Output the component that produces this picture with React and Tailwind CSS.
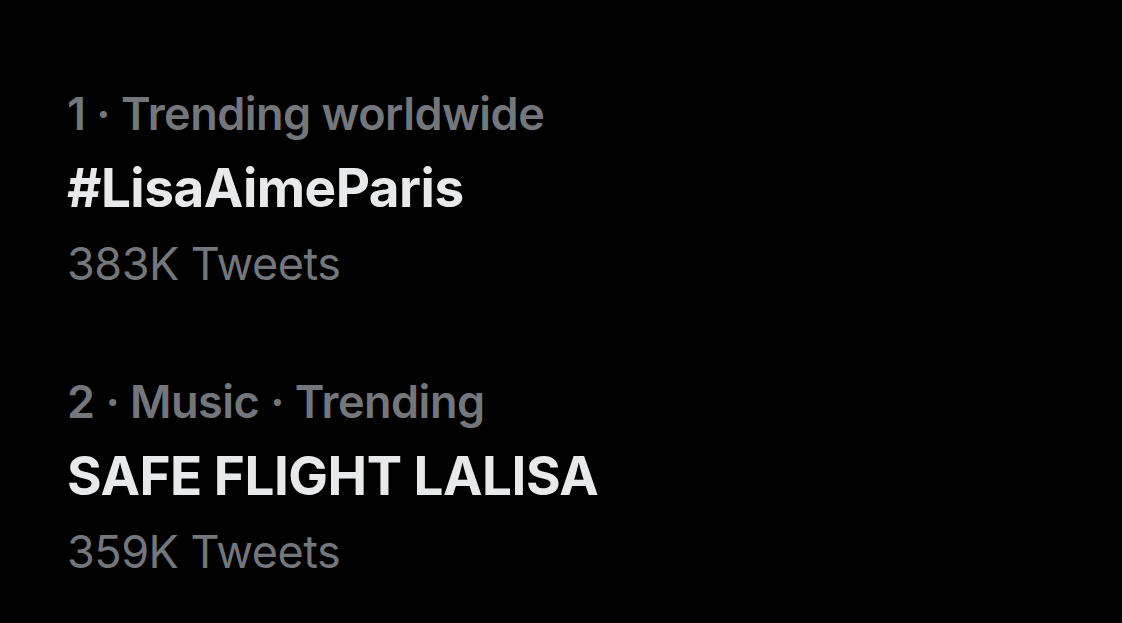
export default function App() {
  const trends = [
    { meta: "1 · Trending worldwide", name: "#LisaAimeParis", count: "383K Tweets" },
    { meta: "2 · Music · Trending", name: "SAFE FLIGHT LALISA", count: "359K Tweets" },
  ];
  return (
    <div
      className="w-[1122px] h-[623px] bg-black overflow-hidden pl-[67px] pt-[76px] flex flex-col gap-[63px]"
      style={{ fontFamily: "Inter, 'Liberation Sans', sans-serif" }}
    >
      {trends.map((t) => (
        <div key={t.name} className="flex flex-col">
          <div className="text-[45px] leading-[75px] font-semibold text-[#73767b] tracking-[-0.5px]">{t.meta}</div>
          <div className="text-[53px] leading-[75px] font-bold text-[#e7e9ea] tracking-[-0.5px]">{t.name}</div>
          <div className="text-[45px] leading-[75px] font-normal text-[#73767b] tracking-[-0.5px]">{t.count}</div>
        </div>
      ))}
    </div>
  );
}
